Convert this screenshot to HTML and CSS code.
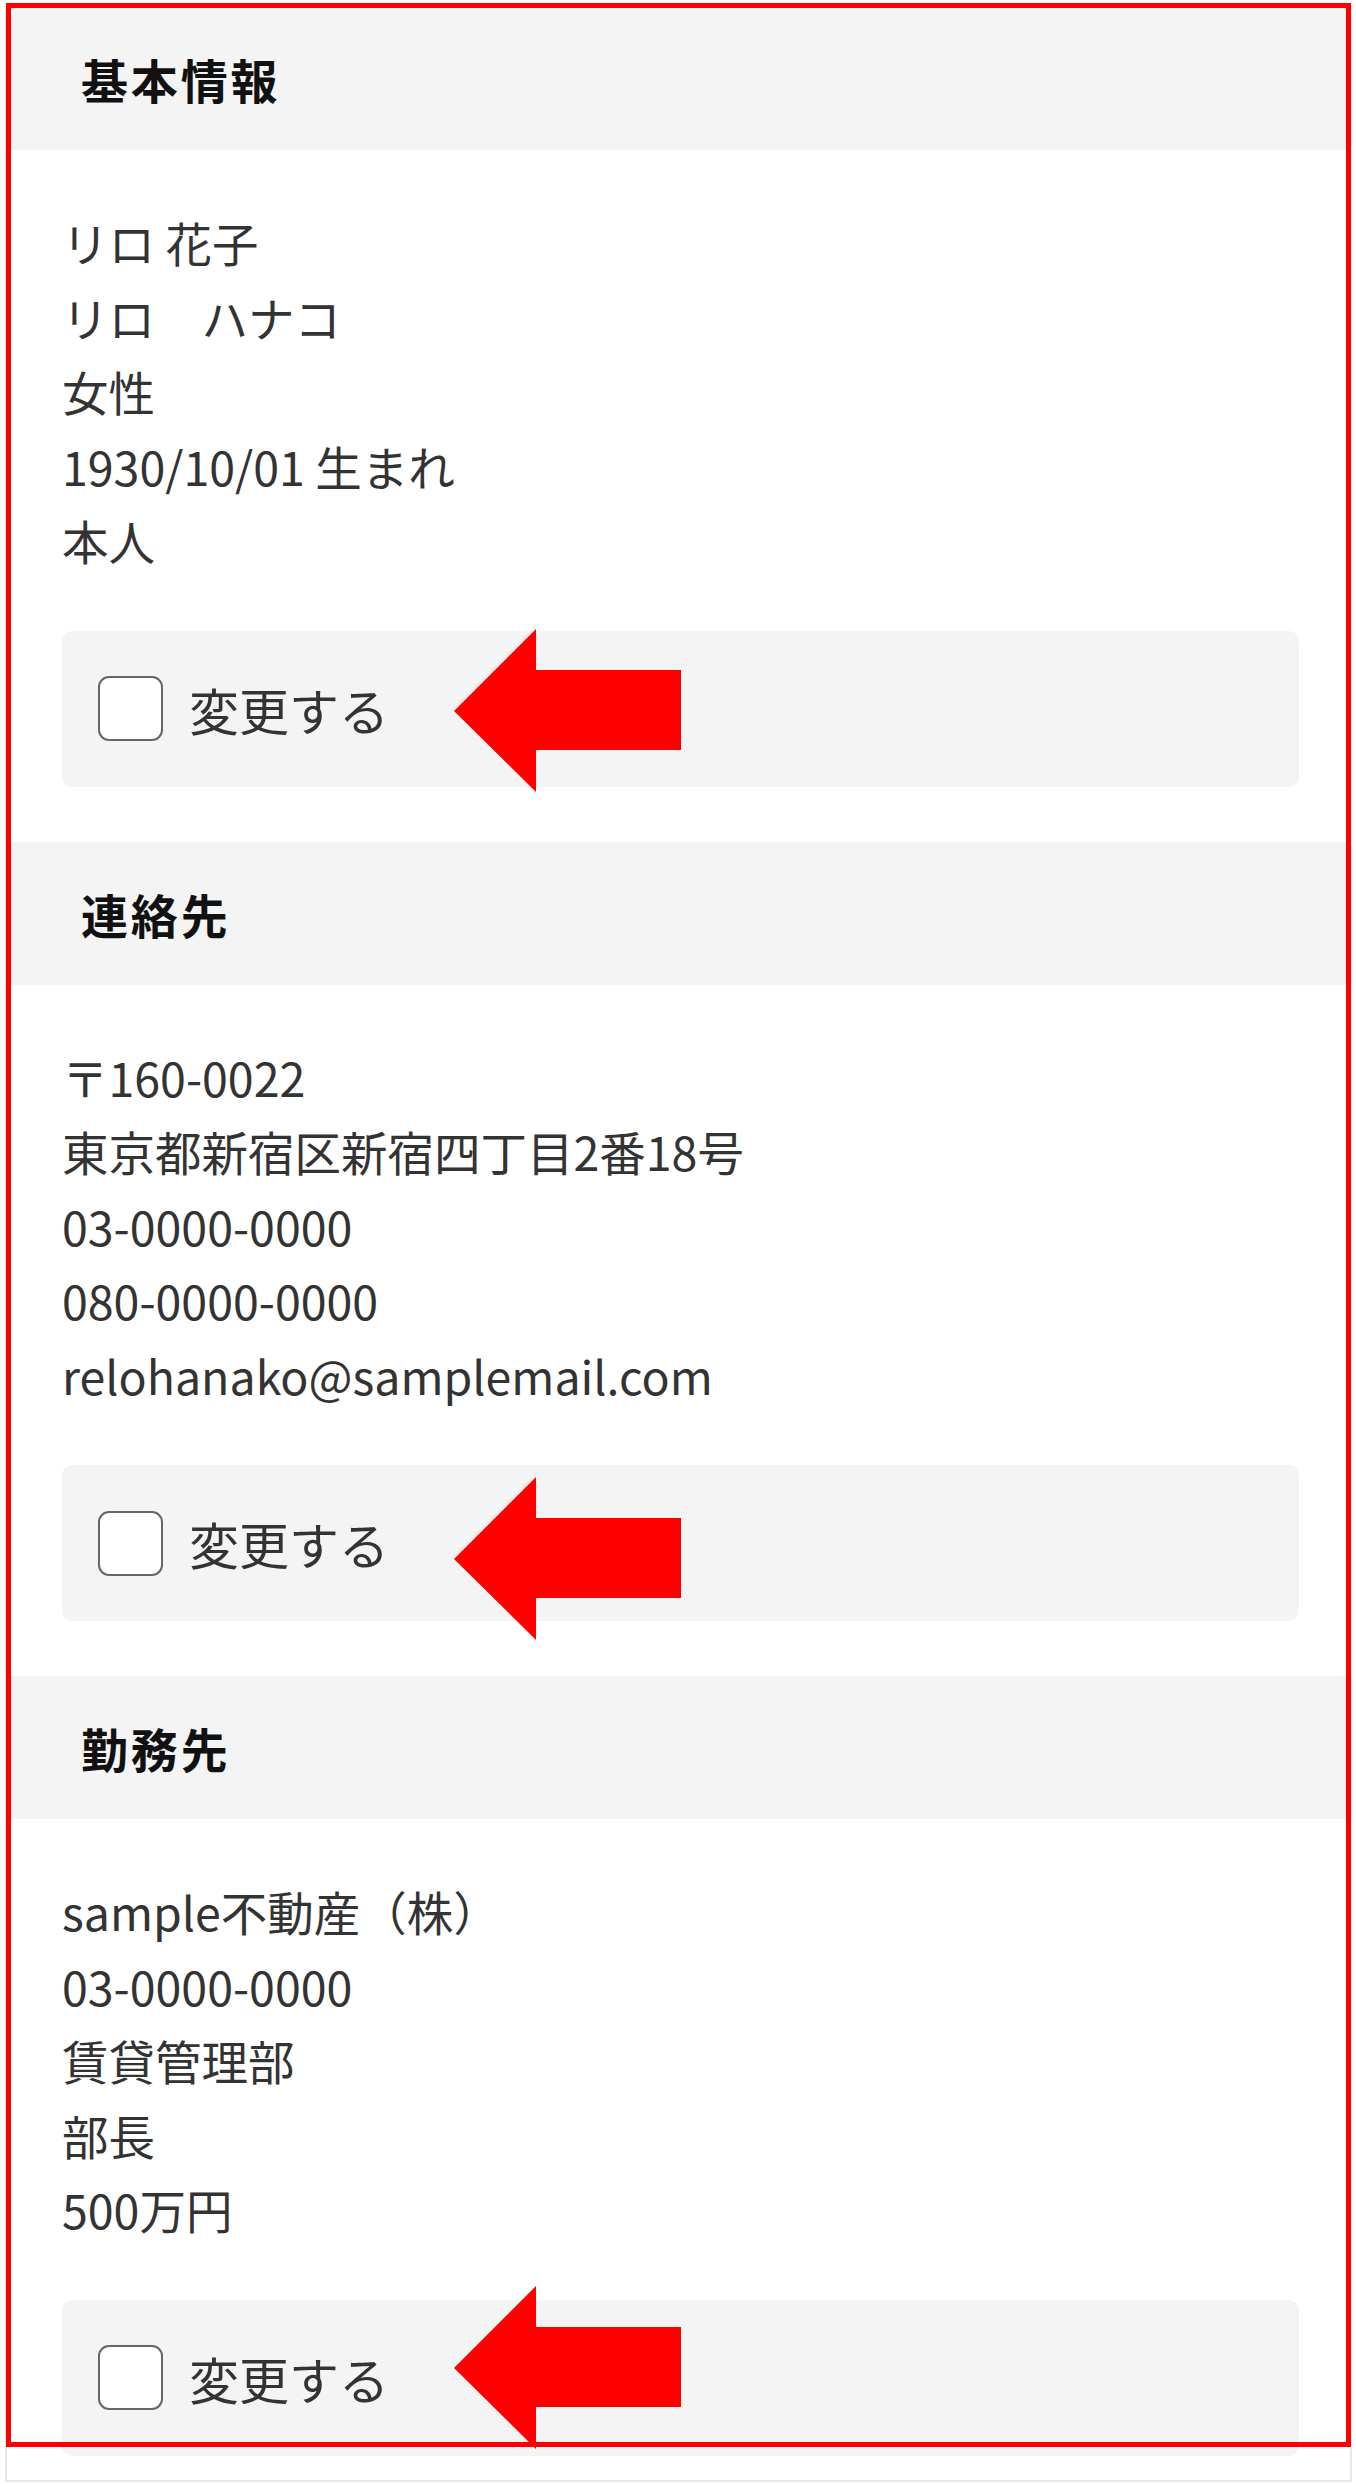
FILE: index.html
```html
<!DOCTYPE html>
<html lang="ja">
    <head>
        <meta charset="UTF-8" />
        <meta name="viewport" content="width=device-width, initial-scale=1.0" />
        <title>登録情報の確認</title>
        <link rel="stylesheet" href="styles.css">
    </head>
    <body>
        <div class="frame">
            <section class="section">
                <h2 class="section-title">基本情報</h2>
                <div class="section-body">
                    <ul class="info-list">
                        <li>リロ 花子</li>
                        <li>リロ　ハナコ</li>
                        <li>女性</li>
                        <li>1930/10/01 生まれ</li>
                        <li>本人</li>
                    </ul>
                    <label class="change-box">
                        <input type="checkbox" class="change-check" />
                        <span class="change-label">変更する</span>
                        <svg class="arrow arrow-1" viewBox="0 0 227 163">
                            <polygon points="0,82 82,0 82,41 227,41 227,121 82,121 82,163" />
                        </svg>
                    </label>
                </div>
            </section>

            <section class="section">
                <h2 class="section-title">連絡先</h2>
                <div class="section-body">
                    <ul class="info-list">
                        <li>〒160-0022</li>
                        <li>東京都新宿区新宿四丁目2番18号</li>
                        <li>03-0000-0000</li>
                        <li>080-0000-0000</li>
                        <li>relohanako@samplemail.com</li>
                    </ul>
                    <label class="change-box">
                        <input type="checkbox" class="change-check" />
                        <span class="change-label">変更する</span>
                        <svg class="arrow arrow-2" viewBox="0 0 227 163">
                            <polygon points="0,82 82,0 82,41 227,41 227,121 82,121 82,163" />
                        </svg>
                    </label>
                </div>
            </section>

            <section class="section">
                <h2 class="section-title">勤務先</h2>
                <div class="section-body">
                    <ul class="info-list">
                        <li>sample不動産（株）</li>
                        <li>03-0000-0000</li>
                        <li>賃貸管理部</li>
                        <li>部長</li>
                        <li>500万円</li>
                    </ul>
                    <label class="change-box">
                        <input type="checkbox" class="change-check" />
                        <span class="change-label">変更する</span>
                        <svg class="arrow arrow-3" viewBox="0 0 227 163">
                            <polygon points="0,82 82,0 82,41 227,41 227,121 82,121 82,163" />
                        </svg>
                    </label>
                </div>
            </section>
        </div>
        <div class="highlight"></div>
    </body>
</html>
```

FILE: styles.css
```css
body {
    font-family: "Noto Sans CJK JP", "Noto Sans", sans-serif;
    background-color: #fff;
    color: #333;
    margin: 0;
    padding: 0;
}
.frame {
    box-sizing: border-box;
    width: 1347px;
    height: 2477px;
    margin: 5px 0 0 5px;
    border: 2px solid #e8e8e8;
    overflow: hidden;
}
.section-title {
    margin: 0;
    padding: 36px 74px;
    background-color: #f4f4f4;
    color: #111;
    font-size: 47px;
    font-weight: 700;
    line-height: 71px;
    letter-spacing: 0.06em;
}
.section-body {
    padding: 55px 51px 55px 55px;
}
.info-list {
    list-style: none;
    margin: 0;
    padding: 0;
    font-size: 46.5px;
    line-height: 74.5px;
}
.change-box {
    position: relative;
    display: flex;
    align-items: center;
    gap: 26px;
    height: 156px;
    margin-top: 53px;
    padding-left: 36px;
    background-color: #f4f4f4;
    border-radius: 10px;
    cursor: pointer;
}
.change-check {
    appearance: none;
    box-sizing: border-box;
    width: 65px;
    height: 65px;
    margin: 0;
    background-color: #fff;
    border: 2px solid #666;
    border-radius: 11px;
}
.change-label {
    font-size: 50px;
    color: #333;
}
.arrow {
    position: absolute;
    left: 392px;
    width: 227px;
    height: 163px;
    fill: #ff0000;
}
.arrow-1 {
    top: -2px;
}
.arrow-2 {
    top: 12px;
}
.arrow-3 {
    top: -14px;
}
.highlight {
    position: absolute;
    left: 6px;
    top: 3px;
    box-sizing: border-box;
    width: 1345px;
    height: 2444px;
    border: 5px solid #ff0000;
    pointer-events: none;
}
```
